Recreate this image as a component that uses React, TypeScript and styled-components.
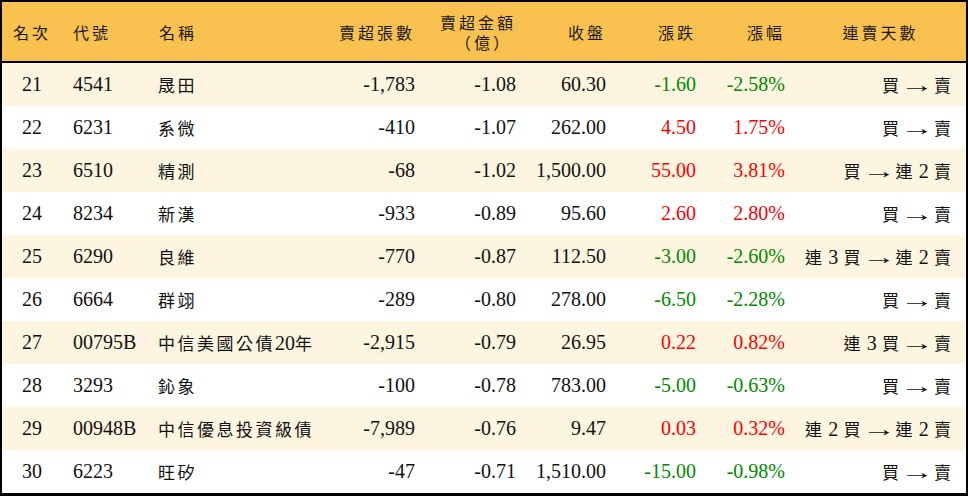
import React from 'react';
import styled, { createGlobalStyle } from 'styled-components';

const GlobalStyle = createGlobalStyle`
  html, body {
    margin: 0;
    padding: 0;
    background: #ffffff;
  }
`;

const COLUMNS = '60px 86px 182px 95px 101px 90px 90px 89px 171px';

type Align = 'left' | 'center' | 'right';
type Tone = 'up' | 'down' | 'flat';

const Table = styled.div`
  width: 968px;
  height: 496px;
  box-sizing: border-box;
  border: 2px solid #000;
  border-bottom-width: 3px;
  font-family: 'Liberation Serif', 'Noto Sans CJK TC', serif;
  color: #111;
  overflow: hidden;
`;

const HeaderRow = styled.div`
  display: grid;
  grid-template-columns: ${COLUMNS};
  height: 59px;
  background: #f9c14f;
  border-bottom: 2px solid #000;
  align-items: center;
`;

const HeaderCell = styled.div<{ $align: Align }>`
  text-align: ${({ $align }) => $align};
  padding: ${({ $align }) =>
    $align === 'left' ? '0 0 0 11px' : $align === 'right' ? '0 10px 0 0' : '0'};
  font-family: 'Noto Sans CJK TC', sans-serif;
  font-size: 16px;
  letter-spacing: 3px;
  line-height: 20px;
  color: #1a1a1a;
`;

const HeaderSub = styled.span`
  display: block;
  padding-right: 4px;
`;

const Row = styled.div<{ $striped: boolean }>`
  display: grid;
  grid-template-columns: ${COLUMNS};
  height: 43px;
  align-items: center;
  background: ${({ $striped }) => ($striped ? '#fef5e0' : '#ffffff')};
`;

const Cell = styled.div<{ $align: Align; $tone?: Tone }>`
  text-align: ${({ $align }) => $align};
  padding: ${({ $align }) =>
    $align === 'left' ? '0 0 0 11px' : $align === 'right' ? '0 10px 0 0' : '0'};
  font-size: 20px;
  white-space: nowrap;
  color: ${({ $tone }) =>
    $tone === 'up' ? '#ff0000' : $tone === 'down' ? '#008a00' : '#111'};
`;

const NameCell = styled(Cell)`
  padding-left: 10px;
  letter-spacing: 2.5px;
  font-size: 17px;
`;

const StreakCell = styled(Cell)`
  padding-right: 14px;
  font-size: 17px;
  letter-spacing: 1px;
`;

const Num = styled.span`
  font-size: 20px;
  letter-spacing: 0;
  font-family: 'Liberation Serif', serif;
`;

const Arrow = styled.span`
  font-family: 'Liberation Serif', serif;
  font-size: 20px;
  letter-spacing: 0;
  display: inline-block;
  transform: scaleX(1.7);
  margin: 0 7px;
`;

interface Stock {
  rank: number;
  code: string;
  name: string;
  lots: string;
  amount: string;
  close: string;
  change: string;
  pct: string;
  streak: string;
}

const stocks: Stock[] = [
  { rank: 21, code: '4541', name: '晟田', lots: '-1,783', amount: '-1.08', close: '60.30', change: '-1.60', pct: '-2.58%', streak: '買 → 賣' },
  { rank: 22, code: '6231', name: '系微', lots: '-410', amount: '-1.07', close: '262.00', change: '4.50', pct: '1.75%', streak: '買 → 賣' },
  { rank: 23, code: '6510', name: '精測', lots: '-68', amount: '-1.02', close: '1,500.00', change: '55.00', pct: '3.81%', streak: '買 → 連 2 賣' },
  { rank: 24, code: '8234', name: '新漢', lots: '-933', amount: '-0.89', close: '95.60', change: '2.60', pct: '2.80%', streak: '買 → 賣' },
  { rank: 25, code: '6290', name: '良維', lots: '-770', amount: '-0.87', close: '112.50', change: '-3.00', pct: '-2.60%', streak: '連 3 買 → 連 2 賣' },
  { rank: 26, code: '6664', name: '群翊', lots: '-289', amount: '-0.80', close: '278.00', change: '-6.50', pct: '-2.28%', streak: '買 → 賣' },
  { rank: 27, code: '00795B', name: '中信美國公債20年', lots: '-2,915', amount: '-0.79', close: '26.95', change: '0.22', pct: '0.82%', streak: '連 3 買 → 賣' },
  { rank: 28, code: '3293', name: '鈊象', lots: '-100', amount: '-0.78', close: '783.00', change: '-5.00', pct: '-0.63%', streak: '買 → 賣' },
  { rank: 29, code: '00948B', name: '中信優息投資級債', lots: '-7,989', amount: '-0.76', close: '9.47', change: '0.03', pct: '0.32%', streak: '連 2 買 → 連 2 賣' },
  { rank: 30, code: '6223', name: '旺矽', lots: '-47', amount: '-0.71', close: '1,510.00', change: '-15.00', pct: '-0.98%', streak: '買 → 賣' },
];

const toneOf = (v: string): Tone => (v.startsWith('-') ? 'down' : 'up');

// digits and arrows inside mixed text keep their own faces
const renderMixed = (text: string) =>
  text.split(/(\d+| → )/).map((part, i) => {
    if (part === ' → ') return <Arrow key={i}>→</Arrow>;
    if (/^\d+$/.test(part)) return <Num key={i}>{part}</Num>;
    return <React.Fragment key={i}>{part}</React.Fragment>;
  });

export default function App() {
  return (
    <>
      <GlobalStyle />
      <Table>
        <HeaderRow>
          <HeaderCell $align="center">名次</HeaderCell>
          <HeaderCell $align="left">代號</HeaderCell>
          <HeaderCell $align="left">名稱</HeaderCell>
          <HeaderCell $align="right">賣超張數</HeaderCell>
          <HeaderCell $align="right">
            賣超金額
            <HeaderSub>（億）</HeaderSub>
          </HeaderCell>
          <HeaderCell $align="right">收盤</HeaderCell>
          <HeaderCell $align="right">漲跌</HeaderCell>
          <HeaderCell $align="right">漲幅</HeaderCell>
          <HeaderCell $align="center">連賣天數</HeaderCell>
        </HeaderRow>
        {stocks.map((s, i) => (
          <Row key={s.rank} $striped={i % 2 === 0}>
            <Cell $align="center">{s.rank}</Cell>
            <Cell $align="left">{s.code}</Cell>
            <NameCell $align="left">{renderMixed(s.name)}</NameCell>
            <Cell $align="right">{s.lots}</Cell>
            <Cell $align="right">{s.amount}</Cell>
            <Cell $align="right">{s.close}</Cell>
            <Cell $align="right" $tone={toneOf(s.change)}>{s.change}</Cell>
            <Cell $align="right" $tone={toneOf(s.pct)}>{s.pct}</Cell>
            <StreakCell $align="right">{renderMixed(s.streak)}</StreakCell>
          </Row>
        ))}
      </Table>
    </>
  );
}
